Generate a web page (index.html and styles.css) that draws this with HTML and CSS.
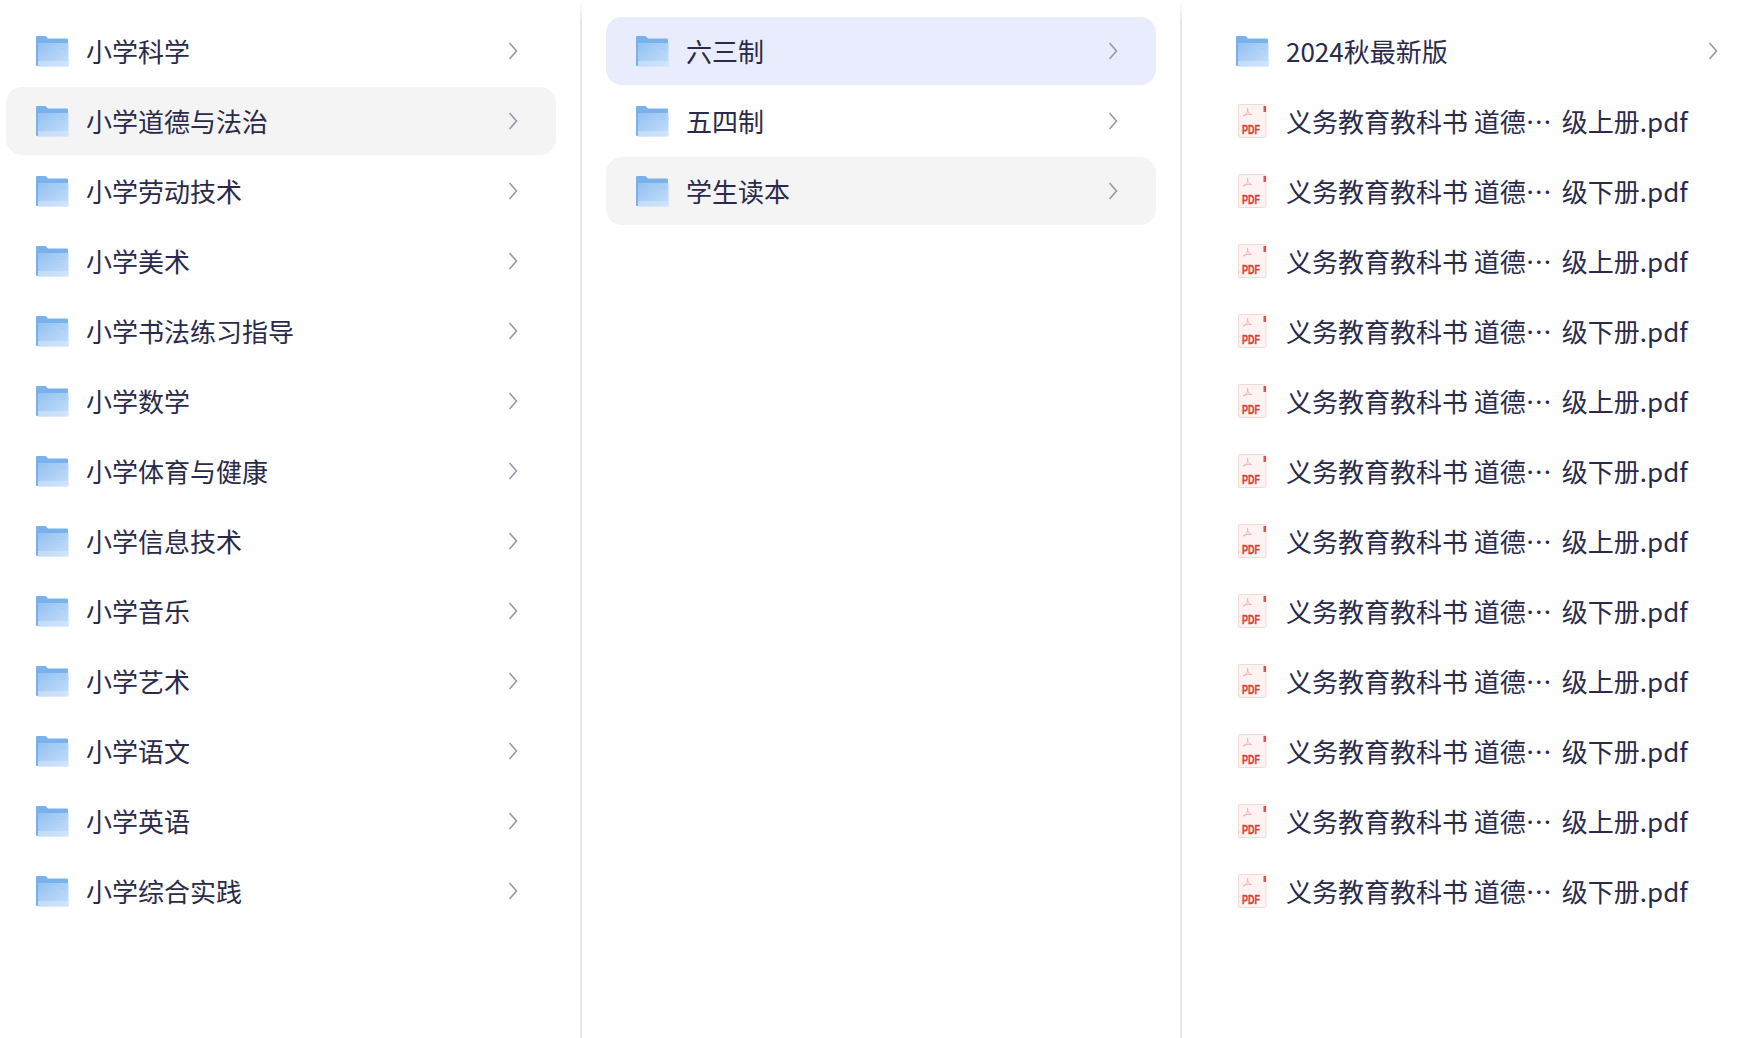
FILE: index.html
```html
<!DOCTYPE html>
<html lang="zh">
<head>
<meta charset="utf-8">
<title>教材目录</title>
<link rel="stylesheet" href="styles.css">
</head>
<body>
<svg class="defs" width="0" height="0" aria-hidden="true">
  <defs>
    <linearGradient id="fg" x1="0" y1="0" x2="1" y2="1">
      <stop offset="0" stop-color="#93c1f1"/>
      <stop offset="1" stop-color="#c6dffa"/>
    </linearGradient>
    <symbol id="folder" viewBox="0 0 34 32">
      <path d="M1 2a1 1 0 0 1 1-1h8.500l2.500 2.500h19a1 1 0 0 1 1 1v25.500a1 1 0 0 1-1 1H2a1 1 0 0 1-1-1z" fill="#79b1ec"/>
      <rect x="3" y="8" width="30.500" height="23.500" rx="1" fill="url(#fg)"/>
      <rect x="3" y="26" width="30.500" height="5.500" fill="#dbeafc" opacity=".5"/>
      <path d="M25.500 11.500h5M25.500 14h5" stroke="#a3c7ee" stroke-width="1"/>
    </symbol>
    <symbol id="pdf" viewBox="0 0 30 36">
      <rect x="0.500" y="1.500" width="27.500" height="33" rx="1.500" fill="#fdf3f2" stroke="#f6d8d6"/>
      <rect x="25.500" y="3" width="2.500" height="6" fill="#e2504b"/>
      <path d="M5 13c3-1 5-3 4.500-8 0 3.500 1 6 4 6.500-3-.5-6 0-8.500 1.500z" fill="none" stroke="#f0b5b1" stroke-width="1"/>
      <text class="pdf-text" x="13" y="31" text-anchor="middle" textLength="18" lengthAdjust="spacingAndGlyphs">PDF</text>
    </symbol>
    <symbol id="chev" viewBox="0 0 10 18">
      <path d="M1.500 1l7 8-7 8" fill="none" stroke="#9a9aab" stroke-width="1.700"/>
    </symbol>
  </defs>
</svg>
<main class="browser">
  <section class="col col-first">
    <div class="row"><svg class="ic-folder"><use href="#folder"/></svg><span class="name">小学科学</span><svg class="chev"><use href="#chev"/></svg></div>
    <div class="row hover"><svg class="ic-folder"><use href="#folder"/></svg><span class="name">小学道德与法治</span><svg class="chev"><use href="#chev"/></svg></div>
    <div class="row"><svg class="ic-folder"><use href="#folder"/></svg><span class="name">小学劳动技术</span><svg class="chev"><use href="#chev"/></svg></div>
    <div class="row"><svg class="ic-folder"><use href="#folder"/></svg><span class="name">小学美术</span><svg class="chev"><use href="#chev"/></svg></div>
    <div class="row"><svg class="ic-folder"><use href="#folder"/></svg><span class="name">小学书法练习指导</span><svg class="chev"><use href="#chev"/></svg></div>
    <div class="row"><svg class="ic-folder"><use href="#folder"/></svg><span class="name">小学数学</span><svg class="chev"><use href="#chev"/></svg></div>
    <div class="row"><svg class="ic-folder"><use href="#folder"/></svg><span class="name">小学体育与健康</span><svg class="chev"><use href="#chev"/></svg></div>
    <div class="row"><svg class="ic-folder"><use href="#folder"/></svg><span class="name">小学信息技术</span><svg class="chev"><use href="#chev"/></svg></div>
    <div class="row"><svg class="ic-folder"><use href="#folder"/></svg><span class="name">小学音乐</span><svg class="chev"><use href="#chev"/></svg></div>
    <div class="row"><svg class="ic-folder"><use href="#folder"/></svg><span class="name">小学艺术</span><svg class="chev"><use href="#chev"/></svg></div>
    <div class="row"><svg class="ic-folder"><use href="#folder"/></svg><span class="name">小学语文</span><svg class="chev"><use href="#chev"/></svg></div>
    <div class="row"><svg class="ic-folder"><use href="#folder"/></svg><span class="name">小学英语</span><svg class="chev"><use href="#chev"/></svg></div>
    <div class="row"><svg class="ic-folder"><use href="#folder"/></svg><span class="name">小学综合实践</span><svg class="chev"><use href="#chev"/></svg></div>
  </section>
  <section class="col col-mid">
    <div class="row selected"><svg class="ic-folder"><use href="#folder"/></svg><span class="name">六三制</span><svg class="chev"><use href="#chev"/></svg></div>
    <div class="row"><svg class="ic-folder"><use href="#folder"/></svg><span class="name">五四制</span><svg class="chev"><use href="#chev"/></svg></div>
    <div class="row hover"><svg class="ic-folder"><use href="#folder"/></svg><span class="name">学生读本</span><svg class="chev"><use href="#chev"/></svg></div>
  </section>
  <section class="col col-last">
    <div class="row"><svg class="ic-folder"><use href="#folder"/></svg><span class="name">2024秋最新版</span><svg class="chev"><use href="#chev"/></svg></div>
    <div class="row"><svg class="ic-pdf"><use href="#pdf"/></svg><span class="name">义务教育教科书 道德…</span><span class="tail">级上册.pdf</span></div>
    <div class="row"><svg class="ic-pdf"><use href="#pdf"/></svg><span class="name">义务教育教科书 道德…</span><span class="tail">级下册.pdf</span></div>
    <div class="row"><svg class="ic-pdf"><use href="#pdf"/></svg><span class="name">义务教育教科书 道德…</span><span class="tail">级上册.pdf</span></div>
    <div class="row"><svg class="ic-pdf"><use href="#pdf"/></svg><span class="name">义务教育教科书 道德…</span><span class="tail">级下册.pdf</span></div>
    <div class="row"><svg class="ic-pdf"><use href="#pdf"/></svg><span class="name">义务教育教科书 道德…</span><span class="tail">级上册.pdf</span></div>
    <div class="row"><svg class="ic-pdf"><use href="#pdf"/></svg><span class="name">义务教育教科书 道德…</span><span class="tail">级下册.pdf</span></div>
    <div class="row"><svg class="ic-pdf"><use href="#pdf"/></svg><span class="name">义务教育教科书 道德…</span><span class="tail">级上册.pdf</span></div>
    <div class="row"><svg class="ic-pdf"><use href="#pdf"/></svg><span class="name">义务教育教科书 道德…</span><span class="tail">级下册.pdf</span></div>
    <div class="row"><svg class="ic-pdf"><use href="#pdf"/></svg><span class="name">义务教育教科书 道德…</span><span class="tail">级上册.pdf</span></div>
    <div class="row"><svg class="ic-pdf"><use href="#pdf"/></svg><span class="name">义务教育教科书 道德…</span><span class="tail">级下册.pdf</span></div>
    <div class="row"><svg class="ic-pdf"><use href="#pdf"/></svg><span class="name">义务教育教科书 道德…</span><span class="tail">级上册.pdf</span></div>
    <div class="row"><svg class="ic-pdf"><use href="#pdf"/></svg><span class="name">义务教育教科书 道德…</span><span class="tail">级下册.pdf</span></div>
  </section>
</main>
</body>
</html>
```
FILE: styles.css
```css
html, body {
  margin: 0;
  height: 100%;
  overflow: hidden;
  background: #fff;
}
.defs {
  display: block;
  height: 0;
}
.browser {
  display: flex;
  height: 1038px;
  width: 1755px;
  overflow: hidden;
  font-family: "Noto Sans CJK SC", "Noto Sans", sans-serif;
  font-size: 26px;
  color: #2a2a4a;
}
.col {
  flex: none;
  display: flex;
  flex-direction: column;
  gap: 2px;
  padding-top: 17px;
  box-sizing: border-box;
}
.col-first {
  width: 582px;
  padding-left: 6px;
  border-right: 2px solid #e6e6e8;
  border-image: linear-gradient(to bottom, #fff 0, #e6e6e8 24px) 1;
}
.col-mid {
  width: 600px;
  padding-left: 24px;
  border-right: 2px solid #e6e6e8;
  border-image: linear-gradient(to bottom, #fff 0, #e6e6e8 24px) 1;
}
.col-last {
  width: 574px;
  padding-left: 24px;
}
.row {
  flex: none;
  width: 550px;
  height: 68px;
  box-sizing: border-box;
  display: flex;
  align-items: center;
  padding-left: 29px;
  border-radius: 16px;
  position: relative;
}
.hover {
  background: #f4f4f5;
}
.selected {
  background: #e9ecfd;
}
.ic-folder {
  flex: none;
  width: 34px;
  height: 32px;
  margin-right: 17px;
}
.ic-pdf {
  flex: none;
  width: 30px;
  height: 36px;
  margin-left: 3px;
  margin-right: 18px;
}
.pdf-text {
  font-family: "Liberation Sans", sans-serif;
  font-weight: 700;
  font-size: 13px;
  fill: #d9403a;
  stroke: #d9403a;
  stroke-width: 0.3px;
}
.name {
  white-space: pre;
  margin-top: -2px;
}
.tail {
  margin-left: 10px;
  margin-top: -2px;
  white-space: pre;
}
.chev {
  width: 10px;
  height: 18px;
  position: absolute;
  left: 502px;
  top: 25px;
}
```
